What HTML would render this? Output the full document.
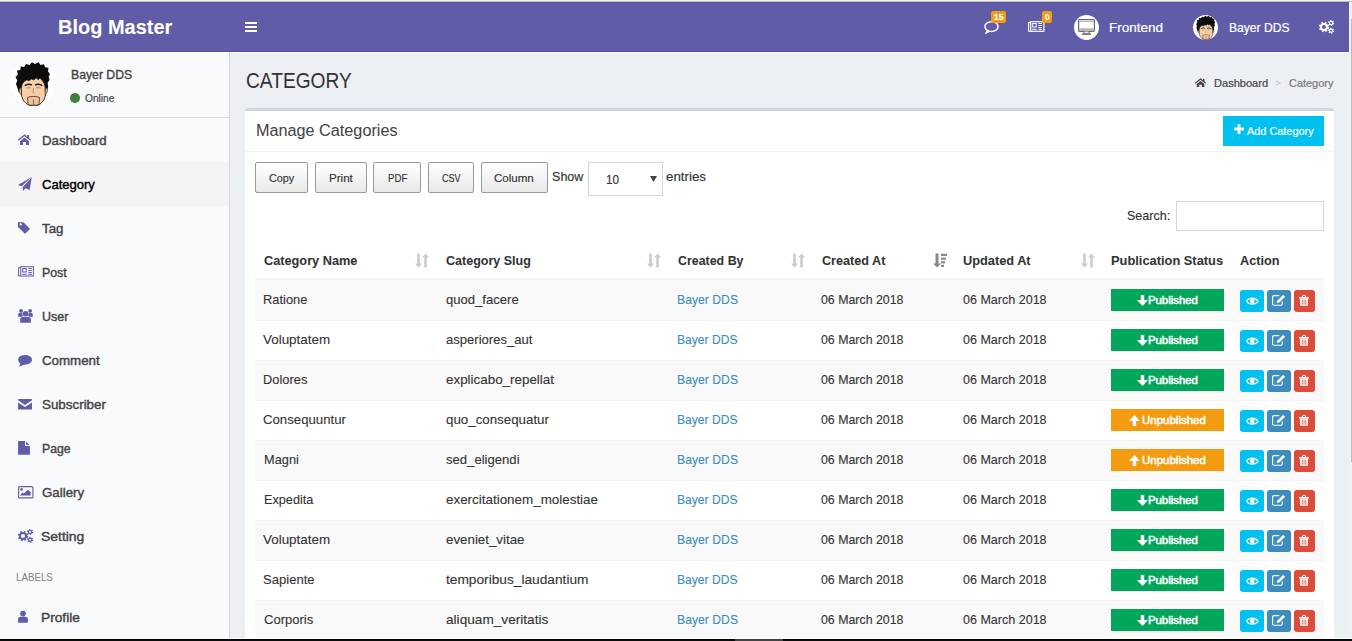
<!DOCTYPE html>
<html><head><meta charset="utf-8"><title>Category</title>
<style>
html,body{margin:0;padding:0;width:1352px;height:641px;overflow:hidden;background:#ecf0f5;}
body{position:relative;font-family:"Liberation Sans", sans-serif;}
.t{position:absolute;white-space:nowrap;line-height:1;-webkit-text-stroke:0.3px currentColor;}
.r{position:absolute;}
.btn{border:1px solid #999;border-radius:2px;background:linear-gradient(to bottom,#fff 0%,#e9e9e9 100%);}
</style></head><body>
<div class="r" style="left:0px;top:0px;width:1352px;height:641px;background:#ecf0f5;"></div>
<div class="r" style="left:0px;top:0px;width:1352px;height:1px;background:#f7f7f7;"></div>
<div class="r" style="left:0px;top:1px;width:1352px;height:1px;background:#c3c0bc;"></div>
<div class="r" style="left:0px;top:2px;width:1349px;height:50px;background:#605ca8;"></div>
<div class="r" style="left:0px;top:2px;width:1349px;height:1px;background:#5a56a7;"></div>
<div class="r" style="left:0px;top:51px;width:1349px;height:1px;background:#5651a0;"></div>
<div class="t" style="left:58.00px;top:16.67px;font-size:20px;color:#fff;font-weight:700;-webkit-text-stroke:0.05px currentColor;transform:scaleX(0.9985);transform-origin:0 0;">Blog Master</div>
<svg class="r" style="left:245px;top:22px;" width="12" height="10" viewBox="0 0 12 10"><rect x="0" y="0" width="12" height="2" fill="#fff"/><rect x="0" y="4" width="12" height="2" fill="#fff"/><rect x="0" y="8" width="12" height="2" fill="#fff"/></svg>
<svg class="r" style="left:984px;top:21px;" width="15" height="13" viewBox="0 0 15 13"><ellipse cx="7.5" cy="5.6" rx="6.6" ry="4.8" fill="none" stroke="#fff" stroke-width="1.5"/><path d="M3.2 9.2 L1.5 12.6 L6 10.2" fill="#fff" stroke="#fff" stroke-width="1"/></svg>
<div class="r" style="left:991px;top:11px;width:15px;height:12px;background:#f39c12;border-radius:2px;"></div>
<div class="t" style="left:993.70px;top:12.98px;font-size:9px;color:#fff;font-weight:700;-webkit-text-stroke:0.05px currentColor;">15</div>
<svg class="r" style="left:1028px;top:21px;" width="17" height="11" viewBox="0 0 17 11"><g fill="#fff"><rect x="2.7" y="0.7" width="13.2" height="9.6" fill="none" stroke="#fff" stroke-width="1.2"/><path d="M2.7 1.6 L0.6 1.6 L0.6 10.3 L2.7 10.3" fill="none" stroke="#fff" stroke-width="1.1"/><rect x="4.7" y="2.5" width="3.5" height="3.5" fill="none" stroke="#fff" stroke-width="1"/><path d="M10.4 2.5 H14 M10.4 4.5 H14 M10.4 6.5 H14 M4.2 8.3 H8.7 M10.4 8.3 H14" stroke="#fff" stroke-width="1"/></g></svg>
<div class="r" style="left:1042px;top:11px;width:10px;height:12px;background:#f39c12;border-radius:2px;"></div>
<div class="t" style="left:1044.70px;top:12.98px;font-size:9px;color:#fff;font-weight:700;-webkit-text-stroke:0.05px currentColor;">0</div>
<div class="r" style="left:1074px;top:15px;width:25px;height:25px;background:#fff;border-radius:50%;"></div>
<svg class="r" style="left:1078px;top:19px;" width="17" height="16" viewBox="0 0 17 16"><rect x="0.6" y="0.6" width="15.8" height="11.8" rx="0.8" fill="#fff" stroke="#6a6a6a" stroke-width="1.2"/><rect x="1.2" y="2" width="14.6" height="1" fill="#bbb"/><rect x="1.2" y="9.3" width="14.6" height="2.6" fill="#b5b5b5"/><path d="M6.2 12.4 L5.3 15 L11.7 15 L10.8 12.4" fill="#ddd" stroke="#777" stroke-width="1"/><rect x="4" y="14.6" width="9" height="1.2" fill="#666"/></svg>
<div class="t" style="left:1109.36px;top:21.68px;font-size:12.9px;color:#fff;font-weight:400;-webkit-text-stroke:0.2px currentColor;transform:scaleX(1.0484);transform-origin:0 0;">Frontend</div>
<svg class="r" style="left:1193px;top:15px;" width="25" height="25" viewBox="0 0 25 25"><g transform="scale(0.5555555555555556)">
<circle cx="22.5" cy="22.5" r="22.5" fill="#fff"/>
<path d="M9 32 L7.5 27 L6 23 L7.2 19.5 L5.5 16 L7.8 13.5 L7 9.5 L10.2 9 L10.8 5.5 L14.2 6 L16 3 L19.5 4 L22 1.3 L25 3 L28.5 1.3 L30.5 4 L34 3.2 L35 6.2 L38.5 6.8 L38 10.2 L40 13.2 L38.6 15.8 L39.6 19 L37.6 21.8 L38.2 26 L36.5 31 L35.2 27 C34.8 23.5 33.8 21.2 32.2 19.6 L30.2 17 L28.2 18.6 L26 16.8 L24 19 L21.5 18 L19 19.6 L16.5 19 L14.2 20.6 L12.2 23 L11.2 27.5 Z" fill="#0d0d0d"/>
<path d="M12.2 23 L14.2 20.6 L16.5 19 L19 19.6 L21.5 18 L24 19 L26 16.8 L28.2 18.6 L30.2 17 L32.2 19.6 C33.8 21.2 34.8 23.5 35.2 27 L35.5 33 C35.3 37 33.5 40 31 42.3 C29 44 26.5 44.8 23.5 44.8 C20.5 44.8 18 44 16 42.3 C13.3 40 11.6 37 11.4 33 L11.2 27.5 Z" fill="#f6cfa6" stroke="#1a1a1a" stroke-width="0.9"/>
<path d="M11.3 27 C9.3 26.5 8.7 29.5 9.6 31.5 C10.1 33 11 33.5 11.5 33.5 Z M35.3 27 C37.3 26.5 37.9 29.5 37 31.5 C36.5 33 35.6 33.5 35.1 33.5 Z" fill="#e8b88c" stroke="#1a1a1a" stroke-width="0.6"/>
<path d="M14.8 24.6 C17 23 20 23 21.8 24.2 M25.2 24.2 C27 23 30 23 32.2 24.6" fill="none" stroke="#1a1a1a" stroke-width="1.5"/>
<path d="M16.5 26.8 L20.5 26.8 M26.5 26.8 L30.5 26.8" stroke="#777" stroke-width="0.8"/>
<path d="M23.5 27 L23 31.5 L24.5 32.5" fill="none" stroke="#8a6a50" stroke-width="0.6"/>
<path d="M17.5 36.5 C20 35 27 35 29.5 36.5 L29 43.5 C27 44.6 20 44.6 18 43.5 Z" fill="#f0c49a" stroke="#333" stroke-width="0.8"/>
<path d="M23.5 38.5 L23.5 44" stroke="#333" stroke-width="0.6"/>
</g></svg>
<div class="t" style="left:1228.82px;top:21.85px;font-size:12.7px;color:#fff;font-weight:400;-webkit-text-stroke:0.2px currentColor;transform:scaleX(0.9528);transform-origin:0 0;">Bayer DDS</div>
<svg class="r" style="left:1318px;top:19px;" width="17" height="16" viewBox="0 0 17 16"><g fill="none" stroke="#fff">
<circle cx="6" cy="8" r="3.05" stroke-width="1.9"/>
<circle cx="6" cy="8" r="4.4" stroke-width="1.6" stroke-dasharray="1.75 1.75"/>
<circle cx="13.1" cy="3.9" r="1.65" stroke-width="1.2"/>
<circle cx="13.1" cy="3.9" r="2.45" stroke-width="1.1" stroke-dasharray="1.3 1.27"/>
<circle cx="13.1" cy="11.8" r="1.65" stroke-width="1.2"/>
<circle cx="13.1" cy="11.8" r="2.45" stroke-width="1.1" stroke-dasharray="1.3 1.27"/>
</g></svg>
<div class="r" style="left:1349px;top:2px;width:3px;height:637px;background:#f1f1f1;"></div>
<div class="r" style="left:1351px;top:19px;width:1px;height:443px;background:#bdbdbd;"></div>
<div class="r" style="left:0px;top:52px;width:229px;height:587px;background:#f9fafc;"></div>
<div class="r" style="left:229px;top:52px;width:1px;height:587px;background:#d2d6de;"></div>
<div class="r" style="left:0px;top:52px;width:229px;height:1px;background:#ffffff;"></div>
<div class="r" style="left:230px;top:52px;width:1119px;height:1px;background:#f4f8f9;"></div>
<svg class="r" style="left:10px;top:61px;" width="45" height="45" viewBox="0 0 45 45"><g transform="scale(1.0)">
<circle cx="22.5" cy="22.5" r="22.5" fill="#fff"/>
<path d="M9 32 L7.5 27 L6 23 L7.2 19.5 L5.5 16 L7.8 13.5 L7 9.5 L10.2 9 L10.8 5.5 L14.2 6 L16 3 L19.5 4 L22 1.3 L25 3 L28.5 1.3 L30.5 4 L34 3.2 L35 6.2 L38.5 6.8 L38 10.2 L40 13.2 L38.6 15.8 L39.6 19 L37.6 21.8 L38.2 26 L36.5 31 L35.2 27 C34.8 23.5 33.8 21.2 32.2 19.6 L30.2 17 L28.2 18.6 L26 16.8 L24 19 L21.5 18 L19 19.6 L16.5 19 L14.2 20.6 L12.2 23 L11.2 27.5 Z" fill="#0d0d0d"/>
<path d="M12.2 23 L14.2 20.6 L16.5 19 L19 19.6 L21.5 18 L24 19 L26 16.8 L28.2 18.6 L30.2 17 L32.2 19.6 C33.8 21.2 34.8 23.5 35.2 27 L35.5 33 C35.3 37 33.5 40 31 42.3 C29 44 26.5 44.8 23.5 44.8 C20.5 44.8 18 44 16 42.3 C13.3 40 11.6 37 11.4 33 L11.2 27.5 Z" fill="#f6cfa6" stroke="#1a1a1a" stroke-width="0.9"/>
<path d="M11.3 27 C9.3 26.5 8.7 29.5 9.6 31.5 C10.1 33 11 33.5 11.5 33.5 Z M35.3 27 C37.3 26.5 37.9 29.5 37 31.5 C36.5 33 35.6 33.5 35.1 33.5 Z" fill="#e8b88c" stroke="#1a1a1a" stroke-width="0.6"/>
<path d="M14.8 24.6 C17 23 20 23 21.8 24.2 M25.2 24.2 C27 23 30 23 32.2 24.6" fill="none" stroke="#1a1a1a" stroke-width="1.5"/>
<path d="M16.5 26.8 L20.5 26.8 M26.5 26.8 L30.5 26.8" stroke="#777" stroke-width="0.8"/>
<path d="M23.5 27 L23 31.5 L24.5 32.5" fill="none" stroke="#8a6a50" stroke-width="0.6"/>
<path d="M17.5 36.5 C20 35 27 35 29.5 36.5 L29 43.5 C27 44.6 20 44.6 18 43.5 Z" fill="#f0c49a" stroke="#333" stroke-width="0.8"/>
<path d="M23.5 38.5 L23.5 44" stroke="#333" stroke-width="0.6"/>
</g></svg>
<div class="t" style="left:70.78px;top:69.44px;font-size:12.0px;color:#444;font-weight:400;-webkit-text-stroke:0.35px currentColor;transform:scaleX(1.0194);transform-origin:0 0;">Bayer DDS</div>
<div class="r" style="left:70px;top:93px;width:10px;height:10px;background:#3d7f3d;border-radius:50%;"></div>
<div class="t" style="left:85.37px;top:94.17px;font-size:10.2px;color:#444;font-weight:400;-webkit-text-stroke:0.2px currentColor;transform:scaleX(0.9979);transform-origin:0 0;">Online</div>
<div class="r" style="left:0px;top:117px;width:229px;height:1px;background:#dbdcdf;"></div>
<div class="t" style="left:41.53px;top:134.00px;font-size:13.0px;color:#444;font-weight:400;-webkit-text-stroke:0.4px currentColor;transform:scaleX(1.0171);transform-origin:0 0;">Dashboard</div>
<svg class="r" style="left:18px;top:134px;" width="13" height="12" viewBox="0 0 13 12"><g fill="#605ca8"><path d="M0.2 6.3 L6.5 1.2 L12.7 6.3" fill="none" stroke="#605ca8" stroke-width="1.4"/><rect x="9.3" y="1" width="1.8" height="3.5" fill="#605ca8"/><path d="M2 7.2 L6.5 3.6 L11 7.2 L11 11 L8 11 L8 8 L5 8 L5 11 L2 11 Z" fill="#605ca8"/></g></svg>
<div class="r" style="left:0px;top:162px;width:229px;height:44px;background:#f4f4f5;"></div>
<div class="t" style="left:41.55px;top:178.00px;font-size:13.0px;color:#000;font-weight:400;-webkit-text-stroke:0.4px currentColor;transform:scaleX(1.0016);transform-origin:0 0;">Category</div>
<svg class="r" style="left:18px;top:176px;" width="15" height="16" viewBox="0 0 15 16"><g fill="#605ca8"><path d="M13.8 1 L0 9 L3.6 10.3 Z" fill="#605ca8"/><path d="M13.8 1.3 L4.6 11.2 L5.1 15 L7.4 12.3 L11.6 13.9 Z" fill="#605ca8"/></g></svg>
<div class="t" style="left:41.56px;top:222.00px;font-size:13.0px;color:#444;font-weight:400;-webkit-text-stroke:0.4px currentColor;transform:scaleX(1.0211);transform-origin:0 0;">Tag</div>
<svg class="r" style="left:18px;top:222px;" width="13" height="13" viewBox="0 0 13 13"><g fill="#605ca8"><path d="M0 0.2 L5.4 0.2 L12.1 6.9 L7 11.8 L0 4.9 Z" fill="#605ca8"/><circle cx="2.7" cy="2.4" r="1.1" fill="#f9fafc"/></g></svg>
<div class="t" style="left:41.59px;top:266.00px;font-size:13.0px;color:#444;font-weight:400;-webkit-text-stroke:0.4px currentColor;transform:scaleX(0.9488);transform-origin:0 0;">Post</div>
<svg class="r" style="left:18px;top:266px;" width="17" height="11" viewBox="0 0 17 11"><g fill="#605ca8"><rect x="2.7" y="0.7" width="12.7" height="9.3" fill="none" stroke="#605ca8" stroke-width="1"/><path d="M2.7 1.6 L0.6 1.6 L0.6 10 L2.7 10" fill="none" stroke="#605ca8" stroke-width="1"/><rect x="4.7" y="2.5" width="3.5" height="3.5" fill="none" stroke="#605ca8" stroke-width="1"/><path d="M10.4 2.5 H13.8 M10.4 4.5 H13.8 M10.4 6.5 H13.8 M4.2 8.3 H8.7 M10.4 8.3 H13.8" stroke="#605ca8" stroke-width="1"/></g></svg>
<div class="t" style="left:41.56px;top:310.00px;font-size:13.0px;color:#444;font-weight:400;-webkit-text-stroke:0.4px currentColor;transform:scaleX(0.9630);transform-origin:0 0;">User</div>
<svg class="r" style="left:18px;top:309px;" width="15" height="14" viewBox="0 0 15 14"><g fill="#605ca8"><circle cx="3.1" cy="1.9" r="1.9"/><circle cx="12.1" cy="1.9" r="1.9"/><circle cx="7.6" cy="4.7" r="2.7"/><path d="M0.1 7.7 L0.1 5.5 Q0.1 4 1.6 4 L4.5 4 Q4.2 5.5 5 7 L4 7.7 Z"/><path d="M14.8 7.7 L14.8 5.5 Q14.8 4 13.3 4 L10.5 4 Q10.8 5.5 10 7 L11 7.7 Z"/><path d="M2.2 13.7 L2.2 10 Q2.2 7.9 4.5 7.9 L10.6 7.9 Q12.9 7.9 12.9 10 L12.9 13.7 Z"/></g></svg>
<div class="t" style="left:41.54px;top:354.00px;font-size:13.0px;color:#444;font-weight:400;-webkit-text-stroke:0.4px currentColor;transform:scaleX(1.0233);transform-origin:0 0;">Comment</div>
<svg class="r" style="left:18px;top:354px;" width="15" height="13" viewBox="0 0 15 13"><g fill="#605ca8"><ellipse cx="7.05" cy="5.8" rx="6.95" ry="4.9"/><path d="M2.6 8.3 L1.1 12.7 L6.5 10.4 Z"/></g></svg>
<div class="t" style="left:41.54px;top:398.00px;font-size:13.0px;color:#444;font-weight:400;-webkit-text-stroke:0.4px currentColor;transform:scaleX(1.0289);transform-origin:0 0;">Subscriber</div>
<svg class="r" style="left:18px;top:398px;" width="15" height="12" viewBox="0 0 15 12"><g fill="#605ca8"><path d="M0.1 1.5 Q0.1 0.9 0.8 0.9 L13.3 0.9 Q14 0.9 14 1.5 L14 2.3 L7 6.9 L0.1 2.3 Z"/><path d="M0.1 4.4 L7 9 L14 4.4 L14 11.6 L0.1 11.6 Z"/></g></svg>
<div class="t" style="left:41.59px;top:442.00px;font-size:13.0px;color:#444;font-weight:400;-webkit-text-stroke:0.4px currentColor;transform:scaleX(0.9434);transform-origin:0 0;">Page</div>
<svg class="r" style="left:18px;top:441px;" width="12" height="14" viewBox="0 0 12 14"><g fill="#605ca8"><path d="M0.1 0.1 L7 0.1 L7 4.9 L11.9 4.9 L11.9 13.7 L0.1 13.7 Z"/><path d="M8 0.5 L8 4 L11.5 4 Z"/></g></svg>
<div class="t" style="left:41.58px;top:486.00px;font-size:13.0px;color:#444;font-weight:400;-webkit-text-stroke:0.4px currentColor;transform:scaleX(1.0226);transform-origin:0 0;">Gallery</div>
<svg class="r" style="left:18px;top:486px;" width="16" height="13" viewBox="0 0 16 13"><g fill="#605ca8"><rect x="0.6" y="0.6" width="14.3" height="11.3" rx="1" fill="none" stroke="#605ca8" stroke-width="1.1"/><circle cx="3.5" cy="3.4" r="1.4"/><path d="M2.2 9.6 L2.2 9 L4.6 6.4 L5.9 7.4 L9.9 3.7 L12.7 6 L12.7 9.6 Z"/></g></svg>
<div class="t" style="left:41.47px;top:530.00px;font-size:13.0px;color:#444;font-weight:400;-webkit-text-stroke:0.4px currentColor;transform:scaleX(1.0702);transform-origin:0 0;">Setting</div>
<svg class="r" style="left:17px;top:528px;" width="17" height="16" viewBox="0 0 17 16"><g fill="none" stroke="#605ca8">
<circle cx="6" cy="8" r="3.05" stroke-width="1.9"/>
<circle cx="6" cy="8" r="4.4" stroke-width="1.6" stroke-dasharray="1.75 1.75"/>
<circle cx="13.1" cy="3.9" r="1.65" stroke-width="1.2"/>
<circle cx="13.1" cy="3.9" r="2.45" stroke-width="1.1" stroke-dasharray="1.3 1.27"/>
<circle cx="13.1" cy="11.8" r="1.65" stroke-width="1.2"/>
<circle cx="13.1" cy="11.8" r="2.45" stroke-width="1.1" stroke-dasharray="1.3 1.27"/>
</g></svg>
<div class="t" style="left:15.88px;top:571.57px;font-size:10.9px;color:#848484;font-weight:400;-webkit-text-stroke:0px currentColor;transform:scaleX(0.8949);transform-origin:0 0;">LABELS</div>
<svg class="r" style="left:18px;top:610px;" width="11" height="13" viewBox="0 0 11 13"><g fill="#605ca8"><circle cx="5" cy="3.6" r="2.8"/><path d="M0.1 12.7 L0.1 9 Q0.1 6.7 2.5 6.7 L7.5 6.7 Q9.9 6.7 9.9 9 L9.9 12.7 Z"/></g></svg>
<div class="t" style="left:41.00px;top:610.90px;font-size:13.0px;color:#444;font-weight:400;-webkit-text-stroke:0.4px currentColor;transform:scaleX(1.0541);transform-origin:0 0;">Profile</div>
<div class="t" style="left:246.00px;top:69.53px;font-size:21.7px;color:#333;font-weight:400;-webkit-text-stroke:0.05px currentColor;transform:scaleX(0.8833);transform-origin:0 0;">CATEGORY</div>
<svg class="r" style="left:1195px;top:77.5px;" width="11" height="9.5" viewBox="0 0 11 9.5"><g transform="scale(0.85)"><path d="M0.2 6.3 L6.5 1.2 L12.7 6.3" fill="none" stroke="#444" stroke-width="1.4"/><rect x="9.3" y="1" width="1.8" height="3.5" fill="#444"/><path d="M2 7.2 L6.5 3.6 L11 7.2 L11 11 L8 11 L8 8 L5 8 L5 11 L2 11 Z" fill="#444"/></g></svg>
<div class="t" style="left:1214.00px;top:77.89px;font-size:11px;color:#444;font-weight:400;-webkit-text-stroke:0.2px currentColor;transform:scaleX(1.0046);transform-origin:0 0;">Dashboard</div>
<div class="t" style="left:1275.40px;top:79.38px;font-size:9px;color:#ccc;font-weight:400;-webkit-text-stroke:0.3px currentColor;">&gt;</div>
<div class="t" style="left:1289.00px;top:77.89px;font-size:11px;color:#777;font-weight:400;-webkit-text-stroke:0.2px currentColor;transform:scaleX(0.9934);transform-origin:0 0;">Category</div>
<div class="r" style="left:245px;top:108px;width:1089px;height:540px;background:#fff;border-radius:3px;box-shadow:0 1px 1px rgba(0,0,0,0.1);"></div>
<div class="r" style="left:245px;top:108px;width:1089px;height:3px;background:#d2d6de;border-radius:3px 3px 0 0;"></div>
<div class="t" style="left:255.56px;top:121.77px;font-size:16.1px;color:#444;font-weight:400;-webkit-text-stroke:0.05px currentColor;transform:scaleX(1.0076);transform-origin:0 0;">Manage Categories</div>
<div class="r" style="left:245px;top:151px;width:1089px;height:1px;background:#f4f4f4;"></div>
<div class="r" style="left:1223px;top:116px;width:101px;height:30px;background:#00c0ef;"></div>
<svg class="r" style="left:1234px;top:124px;" width="10" height="10" viewBox="0 0 10 10"><rect x="3.6" y="0" width="2.8" height="10" fill="#fff"/><rect x="0" y="3.6" width="10" height="2.8" fill="#fff"/></svg>
<div class="t" style="left:1246.56px;top:126.09px;font-size:11px;color:#fff;font-weight:400;-webkit-text-stroke:0.2px currentColor;transform:scaleX(0.9903);transform-origin:0 0;">Add Category</div>
<div class="r btn" style="left:255px;top:162px;width:51px;height:29px;"></div>
<div class="r btn" style="left:315px;top:162px;width:50px;height:29px;"></div>
<div class="r btn" style="left:373px;top:162px;width:46px;height:29px;"></div>
<div class="r btn" style="left:428px;top:162px;width:44px;height:29px;"></div>
<div class="r btn" style="left:481px;top:162px;width:65px;height:29px;"></div>
<div class="t" style="left:268.64px;top:172.69px;font-size:11px;color:#333;font-weight:400;-webkit-text-stroke:0.15px currentColor;transform:scaleX(0.9842);transform-origin:0 0;">Copy</div>
<div class="t" style="left:328.60px;top:172.69px;font-size:11px;color:#333;font-weight:400;-webkit-text-stroke:0.15px currentColor;transform:scaleX(1.0537);transform-origin:0 0;">Print</div>
<div class="t" style="left:387.61px;top:172.69px;font-size:11px;color:#333;font-weight:400;-webkit-text-stroke:0.15px currentColor;transform:scaleX(0.8757);transform-origin:0 0;">PDF</div>
<div class="t" style="left:441.53px;top:172.69px;font-size:11px;color:#333;font-weight:400;-webkit-text-stroke:0.15px currentColor;transform:scaleX(0.8261);transform-origin:0 0;">CSV</div>
<div class="t" style="left:494.27px;top:172.69px;font-size:11px;color:#333;font-weight:400;-webkit-text-stroke:0.15px currentColor;transform:scaleX(1.0494);transform-origin:0 0;">Column</div>
<div class="t" style="left:552.43px;top:171.25px;font-size:12.7px;color:#333;font-weight:400;-webkit-text-stroke:0.15px currentColor;transform:scaleX(0.9905);transform-origin:0 0;">Show</div>
<div class="r" style="left:588px;top:162px;width:73px;height:32px;border:1px solid #d2d6de;background:#fff"></div>
<div class="t" style="left:605.55px;top:173.67px;font-size:12.2px;color:#333;font-weight:400;-webkit-text-stroke:0.15px currentColor;transform:scaleX(0.9638);transform-origin:0 0;">10</div>
<svg class="r" style="left:650px;top:176px;" width="7" height="6" viewBox="0 0 7 6"><path d="M0 0 L7 0 L3.5 6 Z" fill="#444"/></svg>
<div class="t" style="left:665.65px;top:171.25px;font-size:12.7px;color:#333;font-weight:400;-webkit-text-stroke:0.15px currentColor;transform:scaleX(1.0502);transform-origin:0 0;">entries</div>
<div class="t" style="left:1126.88px;top:209.75px;font-size:12.7px;color:#333;font-weight:400;-webkit-text-stroke:0.15px currentColor;transform:scaleX(0.9891);transform-origin:0 0;">Search:</div>
<div class="r" style="left:1176px;top:201px;width:146px;height:28px;border:1px solid #d2d6de;background:#fff"></div>
<div class="t" style="left:263.79px;top:254.85px;font-size:12.7px;color:#333;font-weight:700;-webkit-text-stroke:0.05px currentColor;transform:scaleX(1.0034);transform-origin:0 0;">Category Name</div>
<div class="t" style="left:445.76px;top:254.85px;font-size:12.7px;color:#333;font-weight:700;-webkit-text-stroke:0.05px currentColor;transform:scaleX(0.9867);transform-origin:0 0;">Category Slug</div>
<div class="t" style="left:677.78px;top:254.85px;font-size:12.7px;color:#333;font-weight:700;-webkit-text-stroke:0.05px currentColor;transform:scaleX(0.9780);transform-origin:0 0;">Created By</div>
<div class="t" style="left:821.53px;top:254.85px;font-size:12.7px;color:#333;font-weight:700;-webkit-text-stroke:0.05px currentColor;transform:scaleX(0.9946);transform-origin:0 0;">Created At</div>
<div class="t" style="left:963.44px;top:254.85px;font-size:12.7px;color:#333;font-weight:700;-webkit-text-stroke:0.05px currentColor;transform:scaleX(1.0064);transform-origin:0 0;">Updated At</div>
<div class="t" style="left:1111.20px;top:254.85px;font-size:12.7px;color:#333;font-weight:700;-webkit-text-stroke:0.05px currentColor;transform:scaleX(1.0126);transform-origin:0 0;">Publication Status</div>
<div class="t" style="left:1240.00px;top:254.85px;font-size:12.7px;color:#333;font-weight:700;-webkit-text-stroke:0.05px currentColor;">Action</div>
<svg class="r" style="left:415px;top:252.5px;" width="14" height="15" viewBox="0 0 14 15"><rect x="2.2" y="0.5" width="2.6" height="11" fill="#ccc"/><path d="M0 10.5 L7 10.5 L3.5 14.5 Z" fill="#ccc"/><rect x="9.2" y="3.5" width="2.6" height="11" fill="#ccc"/><path d="M7 4.5 L14 4.5 L10.5 0.5 Z" fill="#ccc"/></svg>
<svg class="r" style="left:647px;top:252.5px;" width="14" height="15" viewBox="0 0 14 15"><rect x="2.2" y="0.5" width="2.6" height="11" fill="#ccc"/><path d="M0 10.5 L7 10.5 L3.5 14.5 Z" fill="#ccc"/><rect x="9.2" y="3.5" width="2.6" height="11" fill="#ccc"/><path d="M7 4.5 L14 4.5 L10.5 0.5 Z" fill="#ccc"/></svg>
<svg class="r" style="left:791px;top:252.5px;" width="14" height="15" viewBox="0 0 14 15"><rect x="2.2" y="0.5" width="2.6" height="11" fill="#ccc"/><path d="M0 10.5 L7 10.5 L3.5 14.5 Z" fill="#ccc"/><rect x="9.2" y="3.5" width="2.6" height="11" fill="#ccc"/><path d="M7 4.5 L14 4.5 L10.5 0.5 Z" fill="#ccc"/></svg>
<svg class="r" style="left:933px;top:252.5px;" width="14" height="15" viewBox="0 0 14 15"><rect x="2.5" y="0.5" width="3" height="11" fill="#888"/><path d="M0 10.5 L8 10.5 L4 14.5 Z" fill="#888"/><rect x="8" y="0.8" width="6" height="2.2" fill="#888"/><rect x="8" y="4.6" width="5" height="2.2" fill="#888"/><rect x="8" y="8.2" width="4" height="2.2" fill="#888"/><rect x="8" y="11.8" width="3" height="2.2" fill="#888"/></svg>
<svg class="r" style="left:1081px;top:252.5px;" width="14" height="15" viewBox="0 0 14 15"><rect x="2.2" y="0.5" width="2.6" height="11" fill="#ccc"/><path d="M0 10.5 L7 10.5 L3.5 14.5 Z" fill="#ccc"/><rect x="9.2" y="3.5" width="2.6" height="11" fill="#ccc"/><path d="M7 4.5 L14 4.5 L10.5 0.5 Z" fill="#ccc"/></svg>
<div class="r" style="left:255px;top:278px;width:1069px;height:2px;background:#f4f4f4;"></div>
<div class="r" style="left:255px;top:280px;width:1069px;height:40px;background:#f9f9f9;"></div>
<div class="t" style="left:263.20px;top:294.18px;font-size:12.9px;color:#333;font-weight:400;-webkit-text-stroke:0.1px currentColor;transform:scaleX(0.9992);transform-origin:0 0;">Ratione</div>
<div class="t" style="left:445.56px;top:294.18px;font-size:12.9px;color:#333;font-weight:400;-webkit-text-stroke:0.1px currentColor;transform:scaleX(1.0143);transform-origin:0 0;">quod_facere</div>
<div class="t" style="left:677.44px;top:294.18px;font-size:12.9px;color:#3c8dbc;font-weight:400;-webkit-text-stroke:0.1px currentColor;transform:scaleX(0.9470);transform-origin:0 0;">Bayer DDS</div>
<div class="t" style="left:821.23px;top:294.18px;font-size:12.9px;color:#333;font-weight:400;-webkit-text-stroke:0.1px currentColor;transform:scaleX(0.9589);transform-origin:0 0;">06 March 2018</div>
<div class="t" style="left:963.00px;top:294.18px;font-size:12.9px;color:#333;font-weight:400;-webkit-text-stroke:0.1px currentColor;transform:scaleX(0.9721);transform-origin:0 0;">06 March 2018</div>
<div class="r" style="left:1111px;top:289px;width:113px;height:22px;background:#00a65a;"></div>
<svg class="r" style="left:1137px;top:295px;" width="11" height="11" viewBox="0 0 11 11"><rect x="3.8" y="0" width="3.4" height="6" fill="#fff"/><path d="M0 5 L11 5 L5.5 11 Z" fill="#fff"/></svg>
<div class="t" style="left:1148.00px;top:295.70px;font-size:10.4px;color:#fff;font-weight:400;-webkit-text-stroke:0.5px currentColor;transform:scaleX(1.0917);transform-origin:0 0;">Published</div>
<div class="r" style="left:1240px;top:290px;width:24px;height:22px;background:#00c0ef;border-radius:3px;"></div>
<svg class="r" style="left:1246px;top:296.5px;" width="13" height="9" viewBox="0 0 13 9"><path d="M0.6 4.2 C3 0.2 9.6 0.2 12 4.2 C9.6 8.2 3 8.2 0.6 4.2 Z" fill="none" stroke="#fff" stroke-width="1.2"/><circle cx="6.3" cy="4.1" r="2.4" fill="#fff"/></svg>
<div class="r" style="left:1267px;top:290px;width:24px;height:22px;background:#3c8dbc;border-radius:3px;"></div>
<svg class="r" style="left:1272px;top:295px;" width="14" height="11" viewBox="0 0 14 11"><path d="M7.2 0.6 L2 0.6 Q0.6 0.6 0.6 2 L0.6 8.8 Q0.6 10.2 2 10.2 L8.8 10.2 Q10.2 10.2 10.2 8.8 L10.2 6.2" fill="none" stroke="#fff" stroke-width="1.1"/><path d="M4.6 8.1 L5.2 5.7 L11.2 -0.2 L13.2 1.8 L7.1 7.6 Z" fill="#fff"/></svg>
<div class="r" style="left:1294px;top:290px;width:21px;height:22px;background:#dd4b39;border-radius:3px;"></div>
<svg class="r" style="left:1299px;top:295px;" width="10" height="11" viewBox="0 0 10 11"><path d="M3.4 2 L3.8 0.5 L6.2 0.5 L6.6 2" fill="none" stroke="#fff" stroke-width="1"/><rect x="0" y="1.9" width="10" height="1.4" fill="#fff"/><path d="M0.8 3.3 L9.2 3.3 L8.8 10.8 L1.2 10.8 Z" fill="#fff"/><rect x="2.8" y="4.6" width="0.9" height="5" fill="#e46a5a"/><rect x="4.6" y="4.6" width="0.9" height="5" fill="#e46a5a"/><rect x="6.4" y="4.6" width="0.9" height="5" fill="#e46a5a"/></svg>
<div class="r" style="left:255px;top:320px;width:1069px;height:1px;background:#f4f4f4;"></div>
<div class="t" style="left:263.20px;top:334.18px;font-size:12.9px;color:#333;font-weight:400;-webkit-text-stroke:0.1px currentColor;transform:scaleX(1.0412);transform-origin:0 0;">Voluptatem</div>
<div class="t" style="left:445.56px;top:334.18px;font-size:12.9px;color:#333;font-weight:400;-webkit-text-stroke:0.1px currentColor;transform:scaleX(1.0120);transform-origin:0 0;">asperiores_aut</div>
<div class="t" style="left:677.45px;top:334.18px;font-size:12.9px;color:#3c8dbc;font-weight:400;-webkit-text-stroke:0.1px currentColor;transform:scaleX(0.9376);transform-origin:0 0;">Bayer DDS</div>
<div class="t" style="left:821.23px;top:334.18px;font-size:12.9px;color:#333;font-weight:400;-webkit-text-stroke:0.1px currentColor;transform:scaleX(0.9589);transform-origin:0 0;">06 March 2018</div>
<div class="t" style="left:963.00px;top:334.18px;font-size:12.9px;color:#333;font-weight:400;-webkit-text-stroke:0.1px currentColor;transform:scaleX(0.9721);transform-origin:0 0;">06 March 2018</div>
<div class="r" style="left:1111px;top:329px;width:113px;height:22px;background:#00a65a;"></div>
<svg class="r" style="left:1137px;top:335px;" width="11" height="11" viewBox="0 0 11 11"><rect x="3.8" y="0" width="3.4" height="6" fill="#fff"/><path d="M0 5 L11 5 L5.5 11 Z" fill="#fff"/></svg>
<div class="t" style="left:1148.00px;top:335.70px;font-size:10.4px;color:#fff;font-weight:400;-webkit-text-stroke:0.5px currentColor;transform:scaleX(1.0917);transform-origin:0 0;">Published</div>
<div class="r" style="left:1240px;top:330px;width:24px;height:22px;background:#00c0ef;border-radius:3px;"></div>
<svg class="r" style="left:1246px;top:336.5px;" width="13" height="9" viewBox="0 0 13 9"><path d="M0.6 4.2 C3 0.2 9.6 0.2 12 4.2 C9.6 8.2 3 8.2 0.6 4.2 Z" fill="none" stroke="#fff" stroke-width="1.2"/><circle cx="6.3" cy="4.1" r="2.4" fill="#fff"/></svg>
<div class="r" style="left:1267px;top:330px;width:24px;height:22px;background:#3c8dbc;border-radius:3px;"></div>
<svg class="r" style="left:1272px;top:335px;" width="14" height="11" viewBox="0 0 14 11"><path d="M7.2 0.6 L2 0.6 Q0.6 0.6 0.6 2 L0.6 8.8 Q0.6 10.2 2 10.2 L8.8 10.2 Q10.2 10.2 10.2 8.8 L10.2 6.2" fill="none" stroke="#fff" stroke-width="1.1"/><path d="M4.6 8.1 L5.2 5.7 L11.2 -0.2 L13.2 1.8 L7.1 7.6 Z" fill="#fff"/></svg>
<div class="r" style="left:1294px;top:330px;width:21px;height:22px;background:#dd4b39;border-radius:3px;"></div>
<svg class="r" style="left:1299px;top:335px;" width="10" height="11" viewBox="0 0 10 11"><path d="M3.4 2 L3.8 0.5 L6.2 0.5 L6.6 2" fill="none" stroke="#fff" stroke-width="1"/><rect x="0" y="1.9" width="10" height="1.4" fill="#fff"/><path d="M0.8 3.3 L9.2 3.3 L8.8 10.8 L1.2 10.8 Z" fill="#fff"/><rect x="2.8" y="4.6" width="0.9" height="5" fill="#e46a5a"/><rect x="4.6" y="4.6" width="0.9" height="5" fill="#e46a5a"/><rect x="6.4" y="4.6" width="0.9" height="5" fill="#e46a5a"/></svg>
<div class="r" style="left:255px;top:360px;width:1069px;height:1px;background:#f4f4f4;"></div>
<div class="r" style="left:255px;top:361px;width:1069px;height:39px;background:#f9f9f9;"></div>
<div class="t" style="left:263.20px;top:374.18px;font-size:12.9px;color:#333;font-weight:400;-webkit-text-stroke:0.1px currentColor;transform:scaleX(0.9992);transform-origin:0 0;">Dolores</div>
<div class="t" style="left:445.57px;top:374.18px;font-size:12.9px;color:#333;font-weight:400;-webkit-text-stroke:0.1px currentColor;transform:scaleX(1.0391);transform-origin:0 0;">explicabo_repellat</div>
<div class="t" style="left:677.44px;top:374.18px;font-size:12.9px;color:#3c8dbc;font-weight:400;-webkit-text-stroke:0.1px currentColor;transform:scaleX(0.9470);transform-origin:0 0;">Bayer DDS</div>
<div class="t" style="left:821.23px;top:374.18px;font-size:12.9px;color:#333;font-weight:400;-webkit-text-stroke:0.1px currentColor;transform:scaleX(0.9589);transform-origin:0 0;">06 March 2018</div>
<div class="t" style="left:963.00px;top:374.18px;font-size:12.9px;color:#333;font-weight:400;-webkit-text-stroke:0.1px currentColor;transform:scaleX(0.9721);transform-origin:0 0;">06 March 2018</div>
<div class="r" style="left:1111px;top:369px;width:113px;height:22px;background:#00a65a;"></div>
<svg class="r" style="left:1137px;top:375px;" width="11" height="11" viewBox="0 0 11 11"><rect x="3.8" y="0" width="3.4" height="6" fill="#fff"/><path d="M0 5 L11 5 L5.5 11 Z" fill="#fff"/></svg>
<div class="t" style="left:1148.00px;top:375.70px;font-size:10.4px;color:#fff;font-weight:400;-webkit-text-stroke:0.5px currentColor;transform:scaleX(1.0917);transform-origin:0 0;">Published</div>
<div class="r" style="left:1240px;top:370px;width:24px;height:22px;background:#00c0ef;border-radius:3px;"></div>
<svg class="r" style="left:1246px;top:376.5px;" width="13" height="9" viewBox="0 0 13 9"><path d="M0.6 4.2 C3 0.2 9.6 0.2 12 4.2 C9.6 8.2 3 8.2 0.6 4.2 Z" fill="none" stroke="#fff" stroke-width="1.2"/><circle cx="6.3" cy="4.1" r="2.4" fill="#fff"/></svg>
<div class="r" style="left:1267px;top:370px;width:24px;height:22px;background:#3c8dbc;border-radius:3px;"></div>
<svg class="r" style="left:1272px;top:375px;" width="14" height="11" viewBox="0 0 14 11"><path d="M7.2 0.6 L2 0.6 Q0.6 0.6 0.6 2 L0.6 8.8 Q0.6 10.2 2 10.2 L8.8 10.2 Q10.2 10.2 10.2 8.8 L10.2 6.2" fill="none" stroke="#fff" stroke-width="1.1"/><path d="M4.6 8.1 L5.2 5.7 L11.2 -0.2 L13.2 1.8 L7.1 7.6 Z" fill="#fff"/></svg>
<div class="r" style="left:1294px;top:370px;width:21px;height:22px;background:#dd4b39;border-radius:3px;"></div>
<svg class="r" style="left:1299px;top:375px;" width="10" height="11" viewBox="0 0 10 11"><path d="M3.4 2 L3.8 0.5 L6.2 0.5 L6.6 2" fill="none" stroke="#fff" stroke-width="1"/><rect x="0" y="1.9" width="10" height="1.4" fill="#fff"/><path d="M0.8 3.3 L9.2 3.3 L8.8 10.8 L1.2 10.8 Z" fill="#fff"/><rect x="2.8" y="4.6" width="0.9" height="5" fill="#e46a5a"/><rect x="4.6" y="4.6" width="0.9" height="5" fill="#e46a5a"/><rect x="6.4" y="4.6" width="0.9" height="5" fill="#e46a5a"/></svg>
<div class="r" style="left:255px;top:400px;width:1069px;height:1px;background:#f4f4f4;"></div>
<div class="t" style="left:263.20px;top:414.18px;font-size:12.9px;color:#333;font-weight:400;-webkit-text-stroke:0.1px currentColor;transform:scaleX(1.0238);transform-origin:0 0;">Consequuntur</div>
<div class="t" style="left:445.57px;top:414.18px;font-size:12.9px;color:#333;font-weight:400;-webkit-text-stroke:0.1px currentColor;transform:scaleX(1.0331);transform-origin:0 0;">quo_consequatur</div>
<div class="t" style="left:677.45px;top:414.18px;font-size:12.9px;color:#3c8dbc;font-weight:400;-webkit-text-stroke:0.1px currentColor;transform:scaleX(0.9376);transform-origin:0 0;">Bayer DDS</div>
<div class="t" style="left:821.23px;top:414.18px;font-size:12.9px;color:#333;font-weight:400;-webkit-text-stroke:0.1px currentColor;transform:scaleX(0.9589);transform-origin:0 0;">06 March 2018</div>
<div class="t" style="left:963.00px;top:414.18px;font-size:12.9px;color:#333;font-weight:400;-webkit-text-stroke:0.1px currentColor;transform:scaleX(0.9721);transform-origin:0 0;">06 March 2018</div>
<div class="r" style="left:1111px;top:409px;width:113px;height:22px;background:#f39c12;"></div>
<svg class="r" style="left:1128.5px;top:414.5px;" width="11" height="11" viewBox="0 0 11 11"><rect x="3.8" y="5" width="3.4" height="6" fill="#fff"/><path d="M0 6 L11 6 L5.5 0 Z" fill="#fff"/></svg>
<div class="t" style="left:1142.13px;top:415.70px;font-size:10.4px;color:#fff;font-weight:400;-webkit-text-stroke:0.5px currentColor;transform:scaleX(1.1049);transform-origin:0 0;">Unpublished</div>
<div class="r" style="left:1240px;top:410px;width:24px;height:22px;background:#00c0ef;border-radius:3px;"></div>
<svg class="r" style="left:1246px;top:416.5px;" width="13" height="9" viewBox="0 0 13 9"><path d="M0.6 4.2 C3 0.2 9.6 0.2 12 4.2 C9.6 8.2 3 8.2 0.6 4.2 Z" fill="none" stroke="#fff" stroke-width="1.2"/><circle cx="6.3" cy="4.1" r="2.4" fill="#fff"/></svg>
<div class="r" style="left:1267px;top:410px;width:24px;height:22px;background:#3c8dbc;border-radius:3px;"></div>
<svg class="r" style="left:1272px;top:415px;" width="14" height="11" viewBox="0 0 14 11"><path d="M7.2 0.6 L2 0.6 Q0.6 0.6 0.6 2 L0.6 8.8 Q0.6 10.2 2 10.2 L8.8 10.2 Q10.2 10.2 10.2 8.8 L10.2 6.2" fill="none" stroke="#fff" stroke-width="1.1"/><path d="M4.6 8.1 L5.2 5.7 L11.2 -0.2 L13.2 1.8 L7.1 7.6 Z" fill="#fff"/></svg>
<div class="r" style="left:1294px;top:410px;width:21px;height:22px;background:#dd4b39;border-radius:3px;"></div>
<svg class="r" style="left:1299px;top:415px;" width="10" height="11" viewBox="0 0 10 11"><path d="M3.4 2 L3.8 0.5 L6.2 0.5 L6.6 2" fill="none" stroke="#fff" stroke-width="1"/><rect x="0" y="1.9" width="10" height="1.4" fill="#fff"/><path d="M0.8 3.3 L9.2 3.3 L8.8 10.8 L1.2 10.8 Z" fill="#fff"/><rect x="2.8" y="4.6" width="0.9" height="5" fill="#e46a5a"/><rect x="4.6" y="4.6" width="0.9" height="5" fill="#e46a5a"/><rect x="6.4" y="4.6" width="0.9" height="5" fill="#e46a5a"/></svg>
<div class="r" style="left:255px;top:440px;width:1069px;height:1px;background:#f4f4f4;"></div>
<div class="r" style="left:255px;top:441px;width:1069px;height:39px;background:#f9f9f9;"></div>
<div class="t" style="left:263.80px;top:454.18px;font-size:12.9px;color:#333;font-weight:400;-webkit-text-stroke:0.1px currentColor;transform:scaleX(0.9925);transform-origin:0 0;">Magni</div>
<div class="t" style="left:445.57px;top:454.18px;font-size:12.9px;color:#333;font-weight:400;-webkit-text-stroke:0.1px currentColor;transform:scaleX(1.0160);transform-origin:0 0;">sed_eligendi</div>
<div class="t" style="left:677.44px;top:454.18px;font-size:12.9px;color:#3c8dbc;font-weight:400;-webkit-text-stroke:0.1px currentColor;transform:scaleX(0.9470);transform-origin:0 0;">Bayer DDS</div>
<div class="t" style="left:821.23px;top:454.18px;font-size:12.9px;color:#333;font-weight:400;-webkit-text-stroke:0.1px currentColor;transform:scaleX(0.9589);transform-origin:0 0;">06 March 2018</div>
<div class="t" style="left:963.00px;top:454.18px;font-size:12.9px;color:#333;font-weight:400;-webkit-text-stroke:0.1px currentColor;transform:scaleX(0.9721);transform-origin:0 0;">06 March 2018</div>
<div class="r" style="left:1111px;top:449px;width:113px;height:22px;background:#f39c12;"></div>
<svg class="r" style="left:1128.5px;top:454.5px;" width="11" height="11" viewBox="0 0 11 11"><rect x="3.8" y="5" width="3.4" height="6" fill="#fff"/><path d="M0 6 L11 6 L5.5 0 Z" fill="#fff"/></svg>
<div class="t" style="left:1142.13px;top:455.70px;font-size:10.4px;color:#fff;font-weight:400;-webkit-text-stroke:0.5px currentColor;transform:scaleX(1.1049);transform-origin:0 0;">Unpublished</div>
<div class="r" style="left:1240px;top:450px;width:24px;height:22px;background:#00c0ef;border-radius:3px;"></div>
<svg class="r" style="left:1246px;top:456.5px;" width="13" height="9" viewBox="0 0 13 9"><path d="M0.6 4.2 C3 0.2 9.6 0.2 12 4.2 C9.6 8.2 3 8.2 0.6 4.2 Z" fill="none" stroke="#fff" stroke-width="1.2"/><circle cx="6.3" cy="4.1" r="2.4" fill="#fff"/></svg>
<div class="r" style="left:1267px;top:450px;width:24px;height:22px;background:#3c8dbc;border-radius:3px;"></div>
<svg class="r" style="left:1272px;top:455px;" width="14" height="11" viewBox="0 0 14 11"><path d="M7.2 0.6 L2 0.6 Q0.6 0.6 0.6 2 L0.6 8.8 Q0.6 10.2 2 10.2 L8.8 10.2 Q10.2 10.2 10.2 8.8 L10.2 6.2" fill="none" stroke="#fff" stroke-width="1.1"/><path d="M4.6 8.1 L5.2 5.7 L11.2 -0.2 L13.2 1.8 L7.1 7.6 Z" fill="#fff"/></svg>
<div class="r" style="left:1294px;top:450px;width:21px;height:22px;background:#dd4b39;border-radius:3px;"></div>
<svg class="r" style="left:1299px;top:455px;" width="10" height="11" viewBox="0 0 10 11"><path d="M3.4 2 L3.8 0.5 L6.2 0.5 L6.6 2" fill="none" stroke="#fff" stroke-width="1"/><rect x="0" y="1.9" width="10" height="1.4" fill="#fff"/><path d="M0.8 3.3 L9.2 3.3 L8.8 10.8 L1.2 10.8 Z" fill="#fff"/><rect x="2.8" y="4.6" width="0.9" height="5" fill="#e46a5a"/><rect x="4.6" y="4.6" width="0.9" height="5" fill="#e46a5a"/><rect x="6.4" y="4.6" width="0.9" height="5" fill="#e46a5a"/></svg>
<div class="r" style="left:255px;top:480px;width:1069px;height:1px;background:#f4f4f4;"></div>
<div class="t" style="left:263.79px;top:494.18px;font-size:12.9px;color:#333;font-weight:400;-webkit-text-stroke:0.1px currentColor;transform:scaleX(0.9848);transform-origin:0 0;">Expedita</div>
<div class="t" style="left:445.57px;top:494.18px;font-size:12.9px;color:#333;font-weight:400;-webkit-text-stroke:0.1px currentColor;transform:scaleX(1.0399);transform-origin:0 0;">exercitationem_molestiae</div>
<div class="t" style="left:677.45px;top:494.18px;font-size:12.9px;color:#3c8dbc;font-weight:400;-webkit-text-stroke:0.1px currentColor;transform:scaleX(0.9376);transform-origin:0 0;">Bayer DDS</div>
<div class="t" style="left:821.23px;top:494.18px;font-size:12.9px;color:#333;font-weight:400;-webkit-text-stroke:0.1px currentColor;transform:scaleX(0.9589);transform-origin:0 0;">06 March 2018</div>
<div class="t" style="left:963.00px;top:494.18px;font-size:12.9px;color:#333;font-weight:400;-webkit-text-stroke:0.1px currentColor;transform:scaleX(0.9721);transform-origin:0 0;">06 March 2018</div>
<div class="r" style="left:1111px;top:489px;width:113px;height:22px;background:#00a65a;"></div>
<svg class="r" style="left:1137px;top:495px;" width="11" height="11" viewBox="0 0 11 11"><rect x="3.8" y="0" width="3.4" height="6" fill="#fff"/><path d="M0 5 L11 5 L5.5 11 Z" fill="#fff"/></svg>
<div class="t" style="left:1148.00px;top:495.70px;font-size:10.4px;color:#fff;font-weight:400;-webkit-text-stroke:0.5px currentColor;transform:scaleX(1.0917);transform-origin:0 0;">Published</div>
<div class="r" style="left:1240px;top:490px;width:24px;height:22px;background:#00c0ef;border-radius:3px;"></div>
<svg class="r" style="left:1246px;top:496.5px;" width="13" height="9" viewBox="0 0 13 9"><path d="M0.6 4.2 C3 0.2 9.6 0.2 12 4.2 C9.6 8.2 3 8.2 0.6 4.2 Z" fill="none" stroke="#fff" stroke-width="1.2"/><circle cx="6.3" cy="4.1" r="2.4" fill="#fff"/></svg>
<div class="r" style="left:1267px;top:490px;width:24px;height:22px;background:#3c8dbc;border-radius:3px;"></div>
<svg class="r" style="left:1272px;top:495px;" width="14" height="11" viewBox="0 0 14 11"><path d="M7.2 0.6 L2 0.6 Q0.6 0.6 0.6 2 L0.6 8.8 Q0.6 10.2 2 10.2 L8.8 10.2 Q10.2 10.2 10.2 8.8 L10.2 6.2" fill="none" stroke="#fff" stroke-width="1.1"/><path d="M4.6 8.1 L5.2 5.7 L11.2 -0.2 L13.2 1.8 L7.1 7.6 Z" fill="#fff"/></svg>
<div class="r" style="left:1294px;top:490px;width:21px;height:22px;background:#dd4b39;border-radius:3px;"></div>
<svg class="r" style="left:1299px;top:495px;" width="10" height="11" viewBox="0 0 10 11"><path d="M3.4 2 L3.8 0.5 L6.2 0.5 L6.6 2" fill="none" stroke="#fff" stroke-width="1"/><rect x="0" y="1.9" width="10" height="1.4" fill="#fff"/><path d="M0.8 3.3 L9.2 3.3 L8.8 10.8 L1.2 10.8 Z" fill="#fff"/><rect x="2.8" y="4.6" width="0.9" height="5" fill="#e46a5a"/><rect x="4.6" y="4.6" width="0.9" height="5" fill="#e46a5a"/><rect x="6.4" y="4.6" width="0.9" height="5" fill="#e46a5a"/></svg>
<div class="r" style="left:255px;top:520px;width:1069px;height:1px;background:#f4f4f4;"></div>
<div class="r" style="left:255px;top:521px;width:1069px;height:39px;background:#f9f9f9;"></div>
<div class="t" style="left:263.20px;top:534.18px;font-size:12.9px;color:#333;font-weight:400;-webkit-text-stroke:0.1px currentColor;transform:scaleX(1.0412);transform-origin:0 0;">Voluptatem</div>
<div class="t" style="left:445.57px;top:534.18px;font-size:12.9px;color:#333;font-weight:400;-webkit-text-stroke:0.1px currentColor;transform:scaleX(1.0334);transform-origin:0 0;">eveniet_vitae</div>
<div class="t" style="left:677.44px;top:534.18px;font-size:12.9px;color:#3c8dbc;font-weight:400;-webkit-text-stroke:0.1px currentColor;transform:scaleX(0.9470);transform-origin:0 0;">Bayer DDS</div>
<div class="t" style="left:821.23px;top:534.18px;font-size:12.9px;color:#333;font-weight:400;-webkit-text-stroke:0.1px currentColor;transform:scaleX(0.9589);transform-origin:0 0;">06 March 2018</div>
<div class="t" style="left:963.00px;top:534.18px;font-size:12.9px;color:#333;font-weight:400;-webkit-text-stroke:0.1px currentColor;transform:scaleX(0.9721);transform-origin:0 0;">06 March 2018</div>
<div class="r" style="left:1111px;top:529px;width:113px;height:22px;background:#00a65a;"></div>
<svg class="r" style="left:1137px;top:535px;" width="11" height="11" viewBox="0 0 11 11"><rect x="3.8" y="0" width="3.4" height="6" fill="#fff"/><path d="M0 5 L11 5 L5.5 11 Z" fill="#fff"/></svg>
<div class="t" style="left:1148.00px;top:535.70px;font-size:10.4px;color:#fff;font-weight:400;-webkit-text-stroke:0.5px currentColor;transform:scaleX(1.0917);transform-origin:0 0;">Published</div>
<div class="r" style="left:1240px;top:530px;width:24px;height:22px;background:#00c0ef;border-radius:3px;"></div>
<svg class="r" style="left:1246px;top:536.5px;" width="13" height="9" viewBox="0 0 13 9"><path d="M0.6 4.2 C3 0.2 9.6 0.2 12 4.2 C9.6 8.2 3 8.2 0.6 4.2 Z" fill="none" stroke="#fff" stroke-width="1.2"/><circle cx="6.3" cy="4.1" r="2.4" fill="#fff"/></svg>
<div class="r" style="left:1267px;top:530px;width:24px;height:22px;background:#3c8dbc;border-radius:3px;"></div>
<svg class="r" style="left:1272px;top:535px;" width="14" height="11" viewBox="0 0 14 11"><path d="M7.2 0.6 L2 0.6 Q0.6 0.6 0.6 2 L0.6 8.8 Q0.6 10.2 2 10.2 L8.8 10.2 Q10.2 10.2 10.2 8.8 L10.2 6.2" fill="none" stroke="#fff" stroke-width="1.1"/><path d="M4.6 8.1 L5.2 5.7 L11.2 -0.2 L13.2 1.8 L7.1 7.6 Z" fill="#fff"/></svg>
<div class="r" style="left:1294px;top:530px;width:21px;height:22px;background:#dd4b39;border-radius:3px;"></div>
<svg class="r" style="left:1299px;top:535px;" width="10" height="11" viewBox="0 0 10 11"><path d="M3.4 2 L3.8 0.5 L6.2 0.5 L6.6 2" fill="none" stroke="#fff" stroke-width="1"/><rect x="0" y="1.9" width="10" height="1.4" fill="#fff"/><path d="M0.8 3.3 L9.2 3.3 L8.8 10.8 L1.2 10.8 Z" fill="#fff"/><rect x="2.8" y="4.6" width="0.9" height="5" fill="#e46a5a"/><rect x="4.6" y="4.6" width="0.9" height="5" fill="#e46a5a"/><rect x="6.4" y="4.6" width="0.9" height="5" fill="#e46a5a"/></svg>
<div class="r" style="left:255px;top:560px;width:1069px;height:1px;background:#f4f4f4;"></div>
<div class="t" style="left:263.20px;top:574.18px;font-size:12.9px;color:#333;font-weight:400;-webkit-text-stroke:0.1px currentColor;transform:scaleX(1.0149);transform-origin:0 0;">Sapiente</div>
<div class="t" style="left:445.57px;top:574.18px;font-size:12.9px;color:#333;font-weight:400;-webkit-text-stroke:0.1px currentColor;transform:scaleX(1.0636);transform-origin:0 0;">temporibus_laudantium</div>
<div class="t" style="left:677.45px;top:574.18px;font-size:12.9px;color:#3c8dbc;font-weight:400;-webkit-text-stroke:0.1px currentColor;transform:scaleX(0.9376);transform-origin:0 0;">Bayer DDS</div>
<div class="t" style="left:821.23px;top:574.18px;font-size:12.9px;color:#333;font-weight:400;-webkit-text-stroke:0.1px currentColor;transform:scaleX(0.9589);transform-origin:0 0;">06 March 2018</div>
<div class="t" style="left:963.00px;top:574.18px;font-size:12.9px;color:#333;font-weight:400;-webkit-text-stroke:0.1px currentColor;transform:scaleX(0.9721);transform-origin:0 0;">06 March 2018</div>
<div class="r" style="left:1111px;top:569px;width:113px;height:22px;background:#00a65a;"></div>
<svg class="r" style="left:1137px;top:575px;" width="11" height="11" viewBox="0 0 11 11"><rect x="3.8" y="0" width="3.4" height="6" fill="#fff"/><path d="M0 5 L11 5 L5.5 11 Z" fill="#fff"/></svg>
<div class="t" style="left:1148.00px;top:575.70px;font-size:10.4px;color:#fff;font-weight:400;-webkit-text-stroke:0.5px currentColor;transform:scaleX(1.0917);transform-origin:0 0;">Published</div>
<div class="r" style="left:1240px;top:570px;width:24px;height:22px;background:#00c0ef;border-radius:3px;"></div>
<svg class="r" style="left:1246px;top:576.5px;" width="13" height="9" viewBox="0 0 13 9"><path d="M0.6 4.2 C3 0.2 9.6 0.2 12 4.2 C9.6 8.2 3 8.2 0.6 4.2 Z" fill="none" stroke="#fff" stroke-width="1.2"/><circle cx="6.3" cy="4.1" r="2.4" fill="#fff"/></svg>
<div class="r" style="left:1267px;top:570px;width:24px;height:22px;background:#3c8dbc;border-radius:3px;"></div>
<svg class="r" style="left:1272px;top:575px;" width="14" height="11" viewBox="0 0 14 11"><path d="M7.2 0.6 L2 0.6 Q0.6 0.6 0.6 2 L0.6 8.8 Q0.6 10.2 2 10.2 L8.8 10.2 Q10.2 10.2 10.2 8.8 L10.2 6.2" fill="none" stroke="#fff" stroke-width="1.1"/><path d="M4.6 8.1 L5.2 5.7 L11.2 -0.2 L13.2 1.8 L7.1 7.6 Z" fill="#fff"/></svg>
<div class="r" style="left:1294px;top:570px;width:21px;height:22px;background:#dd4b39;border-radius:3px;"></div>
<svg class="r" style="left:1299px;top:575px;" width="10" height="11" viewBox="0 0 10 11"><path d="M3.4 2 L3.8 0.5 L6.2 0.5 L6.6 2" fill="none" stroke="#fff" stroke-width="1"/><rect x="0" y="1.9" width="10" height="1.4" fill="#fff"/><path d="M0.8 3.3 L9.2 3.3 L8.8 10.8 L1.2 10.8 Z" fill="#fff"/><rect x="2.8" y="4.6" width="0.9" height="5" fill="#e46a5a"/><rect x="4.6" y="4.6" width="0.9" height="5" fill="#e46a5a"/><rect x="6.4" y="4.6" width="0.9" height="5" fill="#e46a5a"/></svg>
<div class="r" style="left:255px;top:600px;width:1069px;height:1px;background:#f4f4f4;"></div>
<div class="r" style="left:255px;top:601px;width:1069px;height:39px;background:#f9f9f9;"></div>
<div class="t" style="left:263.79px;top:614.18px;font-size:12.9px;color:#333;font-weight:400;-webkit-text-stroke:0.1px currentColor;transform:scaleX(1.0118);transform-origin:0 0;">Corporis</div>
<div class="t" style="left:445.57px;top:614.18px;font-size:12.9px;color:#333;font-weight:400;-webkit-text-stroke:0.1px currentColor;transform:scaleX(1.0576);transform-origin:0 0;">aliquam_veritatis</div>
<div class="t" style="left:677.44px;top:614.18px;font-size:12.9px;color:#3c8dbc;font-weight:400;-webkit-text-stroke:0.1px currentColor;transform:scaleX(0.9470);transform-origin:0 0;">Bayer DDS</div>
<div class="t" style="left:821.23px;top:614.18px;font-size:12.9px;color:#333;font-weight:400;-webkit-text-stroke:0.1px currentColor;transform:scaleX(0.9589);transform-origin:0 0;">06 March 2018</div>
<div class="t" style="left:963.00px;top:614.18px;font-size:12.9px;color:#333;font-weight:400;-webkit-text-stroke:0.1px currentColor;transform:scaleX(0.9721);transform-origin:0 0;">06 March 2018</div>
<div class="r" style="left:1111px;top:609px;width:113px;height:22px;background:#00a65a;"></div>
<svg class="r" style="left:1137px;top:615px;" width="11" height="11" viewBox="0 0 11 11"><rect x="3.8" y="0" width="3.4" height="6" fill="#fff"/><path d="M0 5 L11 5 L5.5 11 Z" fill="#fff"/></svg>
<div class="t" style="left:1148.00px;top:615.70px;font-size:10.4px;color:#fff;font-weight:400;-webkit-text-stroke:0.5px currentColor;transform:scaleX(1.0917);transform-origin:0 0;">Published</div>
<div class="r" style="left:1240px;top:610px;width:24px;height:22px;background:#00c0ef;border-radius:3px;"></div>
<svg class="r" style="left:1246px;top:616.5px;" width="13" height="9" viewBox="0 0 13 9"><path d="M0.6 4.2 C3 0.2 9.6 0.2 12 4.2 C9.6 8.2 3 8.2 0.6 4.2 Z" fill="none" stroke="#fff" stroke-width="1.2"/><circle cx="6.3" cy="4.1" r="2.4" fill="#fff"/></svg>
<div class="r" style="left:1267px;top:610px;width:24px;height:22px;background:#3c8dbc;border-radius:3px;"></div>
<svg class="r" style="left:1272px;top:615px;" width="14" height="11" viewBox="0 0 14 11"><path d="M7.2 0.6 L2 0.6 Q0.6 0.6 0.6 2 L0.6 8.8 Q0.6 10.2 2 10.2 L8.8 10.2 Q10.2 10.2 10.2 8.8 L10.2 6.2" fill="none" stroke="#fff" stroke-width="1.1"/><path d="M4.6 8.1 L5.2 5.7 L11.2 -0.2 L13.2 1.8 L7.1 7.6 Z" fill="#fff"/></svg>
<div class="r" style="left:1294px;top:610px;width:21px;height:22px;background:#dd4b39;border-radius:3px;"></div>
<svg class="r" style="left:1299px;top:615px;" width="10" height="11" viewBox="0 0 10 11"><path d="M3.4 2 L3.8 0.5 L6.2 0.5 L6.6 2" fill="none" stroke="#fff" stroke-width="1"/><rect x="0" y="1.9" width="10" height="1.4" fill="#fff"/><path d="M0.8 3.3 L9.2 3.3 L8.8 10.8 L1.2 10.8 Z" fill="#fff"/><rect x="2.8" y="4.6" width="0.9" height="5" fill="#e46a5a"/><rect x="4.6" y="4.6" width="0.9" height="5" fill="#e46a5a"/><rect x="6.4" y="4.6" width="0.9" height="5" fill="#e46a5a"/></svg>
<div class="r" style="left:0px;top:638px;width:1352px;height:1px;background:#ffffff;"></div>
<div class="r" style="left:0px;top:639px;width:1352px;height:1px;background:#000;"></div>
<div class="r" style="left:0px;top:640px;width:1352px;height:1px;background:#0a0c0e;"></div>
<div class="r" style="left:735px;top:639px;width:48px;height:2px;background:#444;"></div>
</body></html>
